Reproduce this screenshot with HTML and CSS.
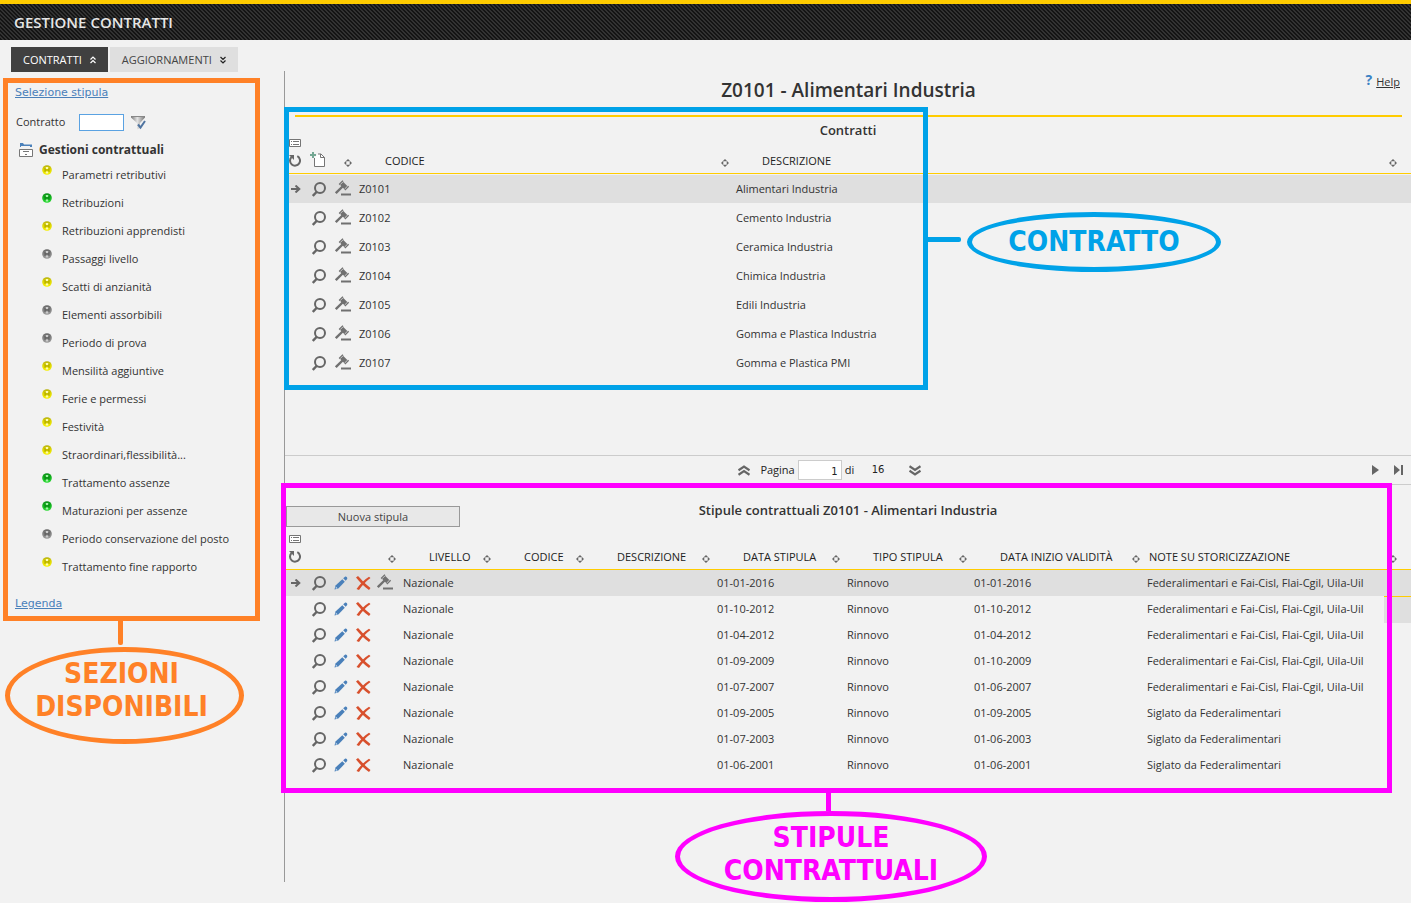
FILE: index.html
```html
<!DOCTYPE html>
<html lang="it">
<head>
<meta charset="utf-8">
<title>Gestione contratti</title>
<link rel="stylesheet" href="styles.css">
</head>
<body>
<svg class="sprite" aria-hidden="true">
  <defs>
    <linearGradient id="gy" x1="0" x2="0" y1="0" y2="1"><stop offset="0" stop-color="#b5af10"/><stop offset=".4" stop-color="#ddd600"/><stop offset="1" stop-color="#f6f000"/></linearGradient>
    <linearGradient id="gg" x1="0" x2="0" y1="0" y2="1"><stop offset="0" stop-color="#0d8a18"/><stop offset=".4" stop-color="#10b31c"/><stop offset="1" stop-color="#2ddc36"/></linearGradient>
    <linearGradient id="gn" x1="0" x2="0" y1="0" y2="1"><stop offset="0" stop-color="#666"/><stop offset=".4" stop-color="#808080"/><stop offset="1" stop-color="#9c9c9c"/></linearGradient>
    <linearGradient id="gf" x1="0" x2="1"><stop offset="0" stop-color="#777"/><stop offset=".45" stop-color="#e4e4e4"/><stop offset="1" stop-color="#777"/></linearGradient>
  </defs>
  <symbol id="dot-y" viewBox="0 0 10 10"><circle cx="5" cy="5" r="4.8" fill="url(#gy)"/><path d="M5 2v2M5 6.500v2" stroke="#fffcb0" stroke-width="2.400"/><path d="M3 3v4M7 3v4M3 5h4" stroke="#a39c00" stroke-width=".8" fill="none"/></symbol>
  <symbol id="dot-g" viewBox="0 0 10 10"><circle cx="5" cy="5" r="4.8" fill="url(#gg)"/><path d="M5 2v2M5 6.500v2" stroke="#a5f5a8" stroke-width="2.400"/><path d="M3 3v4M7 3v4M3 5h4" stroke="#0a7a12" stroke-width=".8" fill="none"/></symbol>
  <symbol id="dot-n" viewBox="0 0 10 10"><circle cx="5" cy="5" r="4.8" fill="url(#gn)"/><path d="M5 2v2M5 6.500v2" stroke="#ccc" stroke-width="2.400"/><path d="M3 3v4M7 3v4M3 5h4" stroke="#555" stroke-width=".8" fill="none"/></symbol>
  <symbol id="list" viewBox="0 0 12 8"><path d="M.5.5h11v7H.5z" fill="#fff" stroke="#757575"/><path d="M2 2.5h1M4 2.5h6M2 5.5h1M4 5.5h6" stroke="#757575"/></symbol>
  <symbol id="reload" viewBox="0 0 12 13"><path d="M8.3 2.2A5 5 0 1 1 2.6 3" fill="none" stroke="#666" stroke-width="2"/><path d="M0 1h5v5z" fill="#666"/></symbol>
  <symbol id="newdoc" viewBox="0 0 15 15"><path d="M4.5 6v8.500h10V5.500L11 2H8" fill="#fff" stroke="#757575"/><path d="M10.500 2v3.500h4" fill="none" stroke="#757575"/><path d="M3 0v6M0 3h6" stroke="#74a793" stroke-width="2"/></symbol>
  <symbol id="move" viewBox="0 0 8 8"><path d="M4 0l2.300 2.300H1.700zM4 8l2.300-2.300H1.700zM0 4l2.300-2.300v4.600zM8 4L5.700 1.700v4.600z" fill="#666"/></symbol>
  <symbol id="arrow" viewBox="0 0 10 8"><path d="M0 4h8M4.500.500L8.300 4 4.500 7.500" fill="none" stroke="#666" stroke-width="2"/></symbol>
  <symbol id="zoom" viewBox="0 0 14 15"><circle cx="8" cy="6" r="5" fill="none" stroke="#666" stroke-width="2"/><path d="M5 9.500L.800 14" stroke="#666" stroke-width="2.400"/></symbol>
  <symbol id="gavel" viewBox="0 0 16 16"><path d="M.800 13.200L7.500 6.500" stroke="#707070" stroke-width="2.400"/><path d="M6.500 3.200L11 7.700" stroke="#707070" stroke-width="4.400"/><path d="M4.200 4.600L8 .800M9.800 10L13.600 6.200" stroke="#707070" stroke-width="1.500"/><path d="M5.200 4.600L8.200 1.600M9.700 8.900L12.600 6" stroke="#ddd" stroke-width=".7"/><path d="M6 14.500h10" stroke="#707070" stroke-width="2"/></symbol>
  <symbol id="pencil" viewBox="0 0 14 14"><path d="M.500 13.500l1-4 6.800-6.300 2.500 2.500L4.300 12.500z" fill="#4a80ba"/><path d="M9.200 2.300L11 .700c1.200-.5 2.700.800 2.200 2.200l-1.500 1.900z" fill="#4a80ba"/><path d="M1.700 10.500l1.800 1.800-1.700.5z" fill="#d5e2f0"/></symbol>
  <symbol id="del" viewBox="0 0 15 14"><path d="M0 1.500L2 0c3 3 7 8 12.500 12L13 14C8 10.500 4 6.500 0 1.500z" fill="#d8502d"/><path d="M14.500 2L13 .800C8 4 4 8 .500 13L3 14C6 9.500 9.500 5.500 14.500 2z" fill="#d8502d"/></symbol>
  <symbol id="chev" viewBox="0 0 12 11"><path d="M.500 5.300L6 1.600l5.500 3.700M.500 9.800L6 6.100l5.500 3.700" fill="none" stroke="#666" stroke-width="2.200"/></symbol>
  <symbol id="tabchev" viewBox="0 0 6 8"><path d="M.500 3.500L3 1l2.500 2.500M.500 7L3 4.500 5.500 7" fill="none" stroke="currentColor" stroke-width="1.200"/></symbol>
</svg>

<header class="topbar"><span class="topbar-title">GESTIONE CONTRATTI</span></header>

<nav class="tabs">
  <button class="tab tab-active" type="button">CONTRATTI <svg class="tab-icon"><use href="#tabchev"/></svg></button>
  <button class="tab" type="button">AGGIORNAMENTI <svg class="tab-icon flip"><use href="#tabchev"/></svg></button>
</nav>

<div class="layout">
  <aside class="sidebar">
    <div class="panel">
      <a class="panel-link" href="#">Selezione stipula</a>
      <form class="search">
        <label for="contratto">Contratto</label>
        <input class="search-box" id="contratto" type="text">
        <button class="icon-button" type="button" aria-label="Filtra"><svg width="15" height="15" viewBox="0 0 15 15"><path d="M0 1h14v1.500L9 8v5l-3 1.500V8L0 2.500z" fill="url(#gf)"/><path d="M1 1.500h12.500" stroke="#888"/><path d="M7 9.500l2.500 3L14 6" fill="none" stroke="#4f74a0" stroke-width="2"/></svg></button>
      </form>
      <h2 class="tree-title"><svg width="14" height="16" viewBox="0 0 14 16"><path d="M1 5V1h3l1 1.500h8V5H11V4H2v1z" fill="#4a80ba"/><path d="M.500 7.500h13v7H.500z" fill="#fff" stroke="#777"/><path d="M4 9.500h6M6 12.500h2" stroke="#777"/></svg>Gestioni contrattuali</h2>
      <ul class="tree">
        <li><svg class="dot"><use href="#dot-y"/></svg>Parametri retributivi</li>
        <li><svg class="dot"><use href="#dot-g"/></svg>Retribuzioni</li>
        <li><svg class="dot"><use href="#dot-y"/></svg>Retribuzioni apprendisti</li>
        <li><svg class="dot"><use href="#dot-n"/></svg>Passaggi livello</li>
        <li><svg class="dot"><use href="#dot-y"/></svg>Scatti di anzianità</li>
        <li><svg class="dot"><use href="#dot-n"/></svg>Elementi assorbibili</li>
        <li><svg class="dot"><use href="#dot-n"/></svg>Periodo di prova</li>
        <li><svg class="dot"><use href="#dot-y"/></svg>Mensilità aggiuntive</li>
        <li><svg class="dot"><use href="#dot-y"/></svg>Ferie e permessi</li>
        <li><svg class="dot"><use href="#dot-y"/></svg>Festività</li>
        <li><svg class="dot"><use href="#dot-y"/></svg>Straordinari,flessibilità...</li>
        <li><svg class="dot"><use href="#dot-g"/></svg>Trattamento assenze</li>
        <li><svg class="dot"><use href="#dot-g"/></svg>Maturazioni per assenze</li>
        <li><svg class="dot"><use href="#dot-n"/></svg>Periodo conservazione del posto</li>
        <li><svg class="dot"><use href="#dot-y"/></svg>Trattamento fine rapporto</li>
      </ul>
      <a class="panel-link" href="#">Legenda</a>
    </div>
    <div class="stem"></div>
    <div class="bubble bubble-orange">SEZIONI<br>DISPONIBILI</div>
  </aside>

  <main class="main">
    <div class="page-head">
      <h1>Z0101 - Alimentari Industria</h1>
      <div class="help"><b class="help-mark">?</b><a class="help-link" href="#">Help</a></div>
    </div>

    <section class="contracts">
      <h2 class="section-title">Contratti</h2>
      <table class="grid grid-contracts">
        <colgroup><col class="c22"><col class="c25"><col class="c25"><col class="c377"><col></colgroup>
        <thead><tr>
          <th><span class="tools"><svg class="i-list"><use href="#list"/></svg><svg class="i-reload"><use href="#reload"/></svg></span></th>
          <th><svg class="i-new"><use href="#newdoc"/></svg></th>
          <th><span class="th"><svg class="i-move"><use href="#move"/></svg></span></th>
          <th><span class="th th-text">CODICE<svg class="i-move"><use href="#move"/></svg></span></th>
          <th><span class="th th-text th-last">DESCRIZIONE<svg class="i-move"><use href="#move"/></svg></span></th>
        </tr></thead>
        <tbody>
          <tr class="selected"><td><svg class="i-arrow"><use href="#arrow"/></svg></td><td><svg class="i-zoom"><use href="#zoom"/></svg></td><td><svg class="i-gavel"><use href="#gavel"/></svg></td><td>Z0101</td><td>Alimentari Industria</td></tr>
          <tr><td></td><td><svg class="i-zoom"><use href="#zoom"/></svg></td><td><svg class="i-gavel"><use href="#gavel"/></svg></td><td>Z0102</td><td>Cemento Industria</td></tr>
          <tr><td></td><td><svg class="i-zoom"><use href="#zoom"/></svg></td><td><svg class="i-gavel"><use href="#gavel"/></svg></td><td>Z0103</td><td>Ceramica Industria</td></tr>
          <tr><td></td><td><svg class="i-zoom"><use href="#zoom"/></svg></td><td><svg class="i-gavel"><use href="#gavel"/></svg></td><td>Z0104</td><td>Chimica Industria</td></tr>
          <tr><td></td><td><svg class="i-zoom"><use href="#zoom"/></svg></td><td><svg class="i-gavel"><use href="#gavel"/></svg></td><td>Z0105</td><td>Edili Industria</td></tr>
          <tr><td></td><td><svg class="i-zoom"><use href="#zoom"/></svg></td><td><svg class="i-gavel"><use href="#gavel"/></svg></td><td>Z0106</td><td>Gomma e Plastica Industria</td></tr>
          <tr><td></td><td><svg class="i-zoom"><use href="#zoom"/></svg></td><td><svg class="i-gavel"><use href="#gavel"/></svg></td><td>Z0107</td><td>Gomma e Plastica PMI</td></tr>
        </tbody>
      </table>
      <div class="frame frame-blue"></div>
      <div class="note note-blue"><div class="note-line"></div><div class="bubble bubble-blue">CONTRATTO</div></div>
    </section>

    <div class="pager">
      <div class="pager-main">
        <button class="icon-button" type="button" aria-label="Su"><svg class="i-chev"><use href="#chev"/></svg></button>
        <label class="pager-label" for="pagina">Pagina</label>
        <input class="pager-box" id="pagina" type="text" value="1">
        <span class="pager-of">di</span>
        <span class="pager-total">16</span>
        <button class="icon-button" type="button" aria-label="Giù"><svg class="i-chev flip"><use href="#chev"/></svg></button>
      </div>
      <div class="pager-nav">
        <button class="icon-button" type="button" aria-label="Avanti"><svg width="7" height="10" viewBox="0 0 7 10"><path d="M0 0l7 5-7 5z" fill="#666"/></svg></button>
        <button class="icon-button" type="button" aria-label="Ultima"><svg width="9" height="10" viewBox="0 0 9 10"><path d="M0 0l6 5-6 5zM7 0h2v10H7z" fill="#666"/></svg></button>
      </div>
    </div>

    <section class="stipule">
      <div class="stipule-head">
        <button class="new-button" type="button">Nuova stipula</button>
        <h2 class="section-title">Stipule contrattuali Z0101 - Alimentari Industria</h2>
      </div>
      <table class="grid grid-stipule">
        <colgroup><col class="c22"><col class="c25"><col class="c20"><col class="c22"><col class="c27"><col class="c95"><col class="c93"><col class="c126"><col class="c130"><col class="c127"><col class="c173"><col></colgroup>
        <thead><tr>
          <th><span class="tools"><svg class="i-list"><use href="#list"/></svg><svg class="i-reload"><use href="#reload"/></svg></span></th>
          <th></th><th></th><th></th>
          <th><span class="th"><svg class="i-move"><use href="#move"/></svg></span></th>
          <th><span class="th th-text">LIVELLO<svg class="i-move"><use href="#move"/></svg></span></th>
          <th><span class="th th-text">CODICE<svg class="i-move"><use href="#move"/></svg></span></th>
          <th><span class="th th-text">DESCRIZIONE<svg class="i-move"><use href="#move"/></svg></span></th>
          <th><span class="th th-text">DATA STIPULA<svg class="i-move"><use href="#move"/></svg></span></th>
          <th><span class="th th-text">TIPO STIPULA<svg class="i-move"><use href="#move"/></svg></span></th>
          <th><span class="th th-text">DATA INIZIO VALIDITÀ<svg class="i-move"><use href="#move"/></svg></span></th>
          <th><span class="th th-last th-near">NOTE SU STORICIZZAZIONE<svg class="i-move"><use href="#move"/></svg></span></th>
        </tr></thead>
        <tbody>
          <tr class="selected"><td><svg class="i-arrow"><use href="#arrow"/></svg></td><td><svg class="i-zoom"><use href="#zoom"/></svg></td><td><svg class="i-pen"><use href="#pencil"/></svg></td><td><svg class="i-del"><use href="#del"/></svg></td><td><svg class="i-gavel"><use href="#gavel"/></svg></td><td>Nazionale</td><td></td><td></td><td>01-01-2016</td><td>Rinnovo</td><td>01-01-2016</td><td>Federalimentari e Fai-Cisl, Flai-Cgil, Uila-Uil</td></tr>
          <tr><td></td><td><svg class="i-zoom"><use href="#zoom"/></svg></td><td><svg class="i-pen"><use href="#pencil"/></svg></td><td><svg class="i-del"><use href="#del"/></svg></td><td></td><td>Nazionale</td><td></td><td></td><td>01-10-2012</td><td>Rinnovo</td><td>01-10-2012</td><td>Federalimentari e Fai-Cisl, Flai-Cgil, Uila-Uil</td></tr>
          <tr><td></td><td><svg class="i-zoom"><use href="#zoom"/></svg></td><td><svg class="i-pen"><use href="#pencil"/></svg></td><td><svg class="i-del"><use href="#del"/></svg></td><td></td><td>Nazionale</td><td></td><td></td><td>01-04-2012</td><td>Rinnovo</td><td>01-04-2012</td><td>Federalimentari e Fai-Cisl, Flai-Cgil, Uila-Uil</td></tr>
          <tr><td></td><td><svg class="i-zoom"><use href="#zoom"/></svg></td><td><svg class="i-pen"><use href="#pencil"/></svg></td><td><svg class="i-del"><use href="#del"/></svg></td><td></td><td>Nazionale</td><td></td><td></td><td>01-09-2009</td><td>Rinnovo</td><td>01-10-2009</td><td>Federalimentari e Fai-Cisl, Flai-Cgil, Uila-Uil</td></tr>
          <tr><td></td><td><svg class="i-zoom"><use href="#zoom"/></svg></td><td><svg class="i-pen"><use href="#pencil"/></svg></td><td><svg class="i-del"><use href="#del"/></svg></td><td></td><td>Nazionale</td><td></td><td></td><td>01-07-2007</td><td>Rinnovo</td><td>01-06-2007</td><td>Federalimentari e Fai-Cisl, Flai-Cgil, Uila-Uil</td></tr>
          <tr><td></td><td><svg class="i-zoom"><use href="#zoom"/></svg></td><td><svg class="i-pen"><use href="#pencil"/></svg></td><td><svg class="i-del"><use href="#del"/></svg></td><td></td><td>Nazionale</td><td></td><td></td><td>01-09-2005</td><td>Rinnovo</td><td>01-09-2005</td><td>Siglato da Federalimentari</td></tr>
          <tr><td></td><td><svg class="i-zoom"><use href="#zoom"/></svg></td><td><svg class="i-pen"><use href="#pencil"/></svg></td><td><svg class="i-del"><use href="#del"/></svg></td><td></td><td>Nazionale</td><td></td><td></td><td>01-07-2003</td><td>Rinnovo</td><td>01-06-2003</td><td>Siglato da Federalimentari</td></tr>
          <tr><td></td><td><svg class="i-zoom"><use href="#zoom"/></svg></td><td><svg class="i-pen"><use href="#pencil"/></svg></td><td><svg class="i-del"><use href="#del"/></svg></td><td></td><td>Nazionale</td><td></td><td></td><td>01-06-2001</td><td>Rinnovo</td><td>01-06-2001</td><td>Siglato da Federalimentari</td></tr>
        </tbody>
      </table>
      <div class="remnant"></div>
      <div class="frame frame-pink"></div>
      <div class="note note-pink"><div class="note-stem"></div><div class="bubble bubble-pink">STIPULE<br>CONTRATTUALI</div></div>
    </section>
  </main>
</div>
</body>
</html>
```
FILE: styles.css
```css
* { box-sizing: border-box; }

body {
  margin: 0;
  min-height: 100vh;
  background: #f2f2f2;
  color: #333;
  font: 11px/16px "Open Sans", sans-serif;
}

h1, h2 { margin: 0; font-weight: 600; }
button, input { font: inherit; color: inherit; }
svg { display: block; flex: none; }
.sprite { position: absolute; width: 0; height: 0; }
.flip { transform: rotate(180deg); }
.icon-button { display: block; padding: 0; border: 0; background: none; }

.topbar {
  height: 40px;
  padding-left: 14px;
  border-top: 4px solid #fc0;
  background: linear-gradient(45deg, #141414 25%, #323232 25% 50%, #141414 50% 75%, #323232 75%) 0 0 / 4px 4px;
}
.topbar-title { color: #e6e6e6; font-size: 15px; line-height: 36px; font-weight: 600; }

.tabs { display: flex; gap: 2px; padding: 7px 0 0 11px; height: 31px; }
.tab {
  display: flex;
  align-items: center;
  gap: 8px;
  height: 25px;
  padding: 0 12px;
  border: 0;
  background: #dfdfdf;
  color: #444;
}
.tab-active { background: #404040; color: #fff; }
.tab-icon { width: 6px; height: 8px; color: #222; }
.tab-active .tab-icon { color: #fff; }

.layout { display: flex; align-items: flex-start; padding-bottom: 21px; }

.sidebar { width: 284px; padding: 7px 0 0 3px; flex: none; }
.panel { width: 257px; padding: 1px 7px 3px; border: 5px solid #ff8127; }
.panel-link {
  display: block;
  width: max-content;
  color: #4a80ba;
  font: 11px/18px "DejaVu Sans", sans-serif;
}
.search { display: flex; align-items: center; height: 20px; margin: 10px 0 0 1px; }
.search label { width: 63px; }
.search-box { width: 45px; height: 17px; margin-right: 7px; border: 1px solid #5aa2e2; background: #fff; }
.tree-title { display: flex; align-items: center; gap: 6px; margin: 9px 0 0 4px; font-size: 12px; line-height: 18px; font-weight: 700; }
.tree { margin: 2px 0 14px; padding: 0 0 0 27px; list-style: none; }
.tree li { display: flex; align-items: center; gap: 10px; height: 28px; white-space: nowrap; }
.dot { width: 10px; height: 10px; margin-bottom: 10px; }
.stem { width: 5px; height: 24px; margin-left: 115px; border-radius: 0 0 2px 2px; background: #ff8127; }

.bubble {
  display: flex;
  align-items: center;
  justify-content: center;
  border: 5px solid;
  border-radius: 50%;
  font: bold 28px/33px "DejaVu Sans Condensed", "DejaVu Sans", sans-serif;
  text-align: center;
}
.bubble-orange { width: 239px; height: 97px; margin: 2px 0 0 2px; padding: 0 6px 12px 0; color: #ff8127; }
.bubble-blue { width: 254px; height: 60px; padding-bottom: 2px; color: #00a2e8; }
.bubble-pink { width: 312px; height: 91px; padding-bottom: 5px; color: #f0f; }

.main { flex: 1; min-width: 0; min-height: 811px; border-left: 1px solid #999; }
.page-head {
  position: relative;
  height: 46px;
  margin: 0 9px 0 10px;
  padding-top: 4px;
  border-bottom: 2px solid #fc0;
  text-align: center;
}
.page-head h1 { font-size: 19px; line-height: 30px; }
.help { position: absolute; top: 2px; right: 2px; display: flex; gap: 4px; line-height: 18px; }
.help-mark { color: #3c82c4; font-size: 14px; line-height: 14px; }
.help-link { color: #333; }

.section-title { font-size: 13px; line-height: 18px; text-align: center; }
.contracts { position: relative; min-height: 338px; padding-top: 4px; }

.grid { width: 100%; table-layout: fixed; border-spacing: 0; }
.grid th { height: 35px; padding: 0; border-bottom: 1px solid #fc0; font-weight: 400; text-align: left; vertical-align: bottom; white-space: nowrap; color: #222; }
.grid td { padding: 0 0 0 2px; white-space: nowrap; }
.grid-contracts td { height: 29px; border-top: 1px solid #f2f2f2; }
.grid-stipule td { height: 26px; }
.selected td { background: #dfdfdf; }
.c20 { width: 20px; } .c22 { width: 22px; } .c25 { width: 25px; } .c27 { width: 27px; }
.c93 { width: 93px; } .c95 { width: 95px; } .c126 { width: 126px; } .c127 { width: 127px; }
.c130 { width: 130px; } .c173 { width: 173px; } .c377 { width: 377px; }

.tools { display: flex; flex-direction: column; justify-content: space-between; height: 34px; padding: 0 0 6px 4px; }
.th { display: flex; align-items: center; justify-content: space-between; height: 16px; margin-bottom: 4px; padding-right: 5px; }
.th .i-move { margin: 3px 0 0 auto; }
.th-text { padding-left: 28px; }
.th-near { padding-left: 4px; }
.th-last { padding-right: 14px; }

.i-list { width: 12px; height: 8px; }
.i-reload { width: 12px; height: 13px; }
.i-new { width: 15px; height: 15px; margin: 0 0 6px 3px; }
.i-move { width: 8px; height: 8px; }
.i-arrow { width: 10px; height: 8px; margin-left: 4px; }
.i-zoom { width: 14px; height: 15px; margin-left: 3px; }
.i-gavel { width: 16px; height: 16px; margin: 0 0 2px 1px; }
.i-pen { width: 14px; height: 14px; }
.i-del { width: 15px; height: 14px; margin-left: 2px; }
.i-chev { width: 12px; height: 11px; }

.pager { display: flex; align-items: center; justify-content: space-between; height: 30px; padding: 0 8px 0 40%; border: 1px solid #ccc; border-width: 1px 0; color: #222; }
.pager-main, .pager-nav { display: flex; align-items: center; }
.pager-main { padding-left: 3px; }
.pager-nav { gap: 15px; }
.pager-label { margin: 0 3px 0 10px; }
.pager-box { width: 44px; height: 20px; padding: 2px 3px 0; border: 1px solid #ccc; background: #fff; text-align: right; font: 10px/16px "DejaVu Sans", sans-serif; }
.pager-of { width: 30px; padding-left: 3px; }
.pager-total { width: 37px; font-family: "DejaVu Sans", sans-serif; font-size: 10px; }

.stipule { position: relative; }
.stipule-head { display: grid; grid-template-columns: 1fr auto 1fr; align-items: start; height: 50px; padding-top: 16px; }
.new-button { width: 174px; height: 21px; margin: 5px 0 0 1px; border: 1px solid #999; background: #e8e8e8; color: #444; }

.frame { position: absolute; border: 5px solid; pointer-events: none; }
.frame-blue { top: -10px; left: -1px; width: 644px; height: 283px; border-color: #00a2e8; }
.frame-pink { top: -2px; left: -4px; right: 19px; height: 310px; border-color: #f0f; }
.note { position: absolute; }
.note-blue { top: 95px; left: 643px; display: flex; align-items: center; gap: 6px; }
.note-line { width: 33px; height: 5px; margin-bottom: 5px; border-radius: 0 2px 2px 0; background: #00a2e8; }
.note-pink { top: 308px; left: 390px; }
.note-stem { width: 5px; height: 18px; margin-left: 151px; background: #f0f; }
.remnant { position: absolute; top: 111px; right: 0; width: 27px; height: 27px; border-top: 1px solid #fc0; background: #dfdfdf; }
```
